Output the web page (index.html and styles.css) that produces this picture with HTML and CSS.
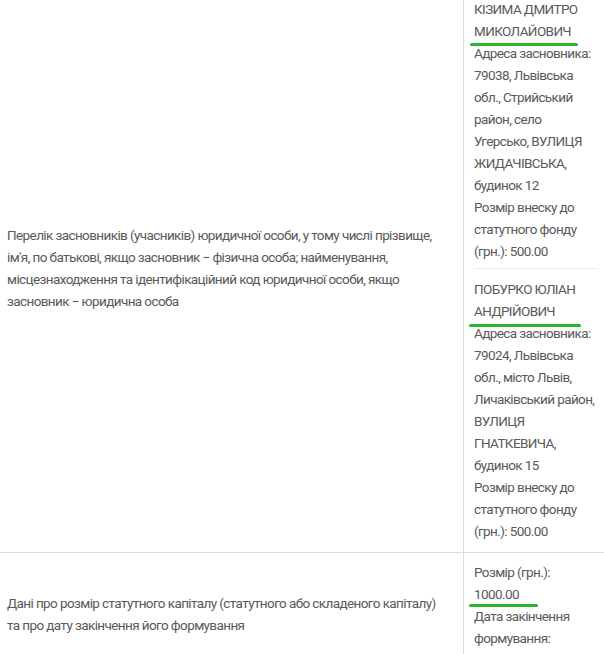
FILE: index.html
```html
<!DOCTYPE html>
<html lang="uk">
<head>
  <meta charset="UTF-8">
  <meta name="viewport" content="width=device-width, initial-scale=1.0">
  <title>Засновники</title>
  <link rel="stylesheet" href="styles.css">
</head>
<body>
  <table class="info-table">
    <tr>
      <td class="label">
        Перелік засновників (учасників) юридичної особи, у тому числі прізвище,
        ім'я, по батькові, якщо засновник &minus; фізична особа; найменування,
        місцезнаходження та ідентифікаційний код юридичної особи, якщо
        засновник &minus; юридична особа
      </td>
      <td class="value">
        <div class="founder">
          <span class="mark">КІЗИМА ДМИТРО<br>МИКОЛАЙОВИЧ</span><br>
          Адреса засновника: 79038, Львівська обл., Стрийський район, село Угерсько, ВУЛИЦЯ ЖИДАЧІВСЬКА, будинок 12<br>
          Розмір внеску до статутного фонду (грн.): 500.00
        </div>
        <div class="founder">
          <span class="mark mark-wide">ПОБУРКО ЮЛІАН<br>АНДРІЙОВИЧ</span><br>
          Адреса засновника: 79024, Львівська обл., місто Львів, Личаківський район, ВУЛИЦЯ ГНАТКЕВИЧА, будинок 15<br>
          Розмір внеску до статутного фонду (грн.): 500.00
        </div>
      </td>
    </tr>
    <tr>
      <td class="label">
        Дані про розмір статутного капіталу (статутного або складеного капіталу)
        та про дату закінчення його формування
      </td>
      <td class="value">
        Розмір (грн.):<br>
        <span class="mark mark-sum">1000.00</span><br>
        Дата закінчення формування:<br>
        &nbsp;
      </td>
    </tr>
  </table>
</body>
</html>
```
FILE: styles.css
```css
body {
  margin: 0;
  background: #fff;
  font-family: "Roboto", "Noto Sans", sans-serif;
  font-size: 13.5px;
  letter-spacing: -0.6px;
  color: #595959;
}

/* таблиця з даними */
.info-table {
  width: 604px;
  border-collapse: collapse;
  margin-top: -11px;
}

.info-table td {
  border-top: 1px solid #dcdcdc;
  line-height: 22px;
}

.label {
  width: 436px;
  padding: 8px 20px 14px 7px;
  vertical-align: middle;
  border-right: 1px solid #dcdcdc;
}

.value {
  padding: 8px 6px 10px 10px;
  vertical-align: top;
}

.founder {
  padding-bottom: 6px;
  border-bottom: 1px solid #ececec;
  margin-bottom: 9px;
}

.founder:last-child {
  border-bottom: none;
  padding-bottom: 0;
  margin-bottom: 0;
}

/* зелене підкреслення (позначка поверх тексту) */
.mark {
  display: inline-block;
  position: relative;
}

.mark::after {
  content: "";
  position: absolute;
  left: -4px;
  right: 0;
  bottom: -4px;
  height: 3px;
  border-radius: 2px;
  background: #2bb52b;
}

.mark-wide::after {
  left: -5px;
  right: -6px;
  bottom: -5px;
}

.mark-sum::after {
  left: -5px;
  right: -19px;
  bottom: -2px;
}
```
